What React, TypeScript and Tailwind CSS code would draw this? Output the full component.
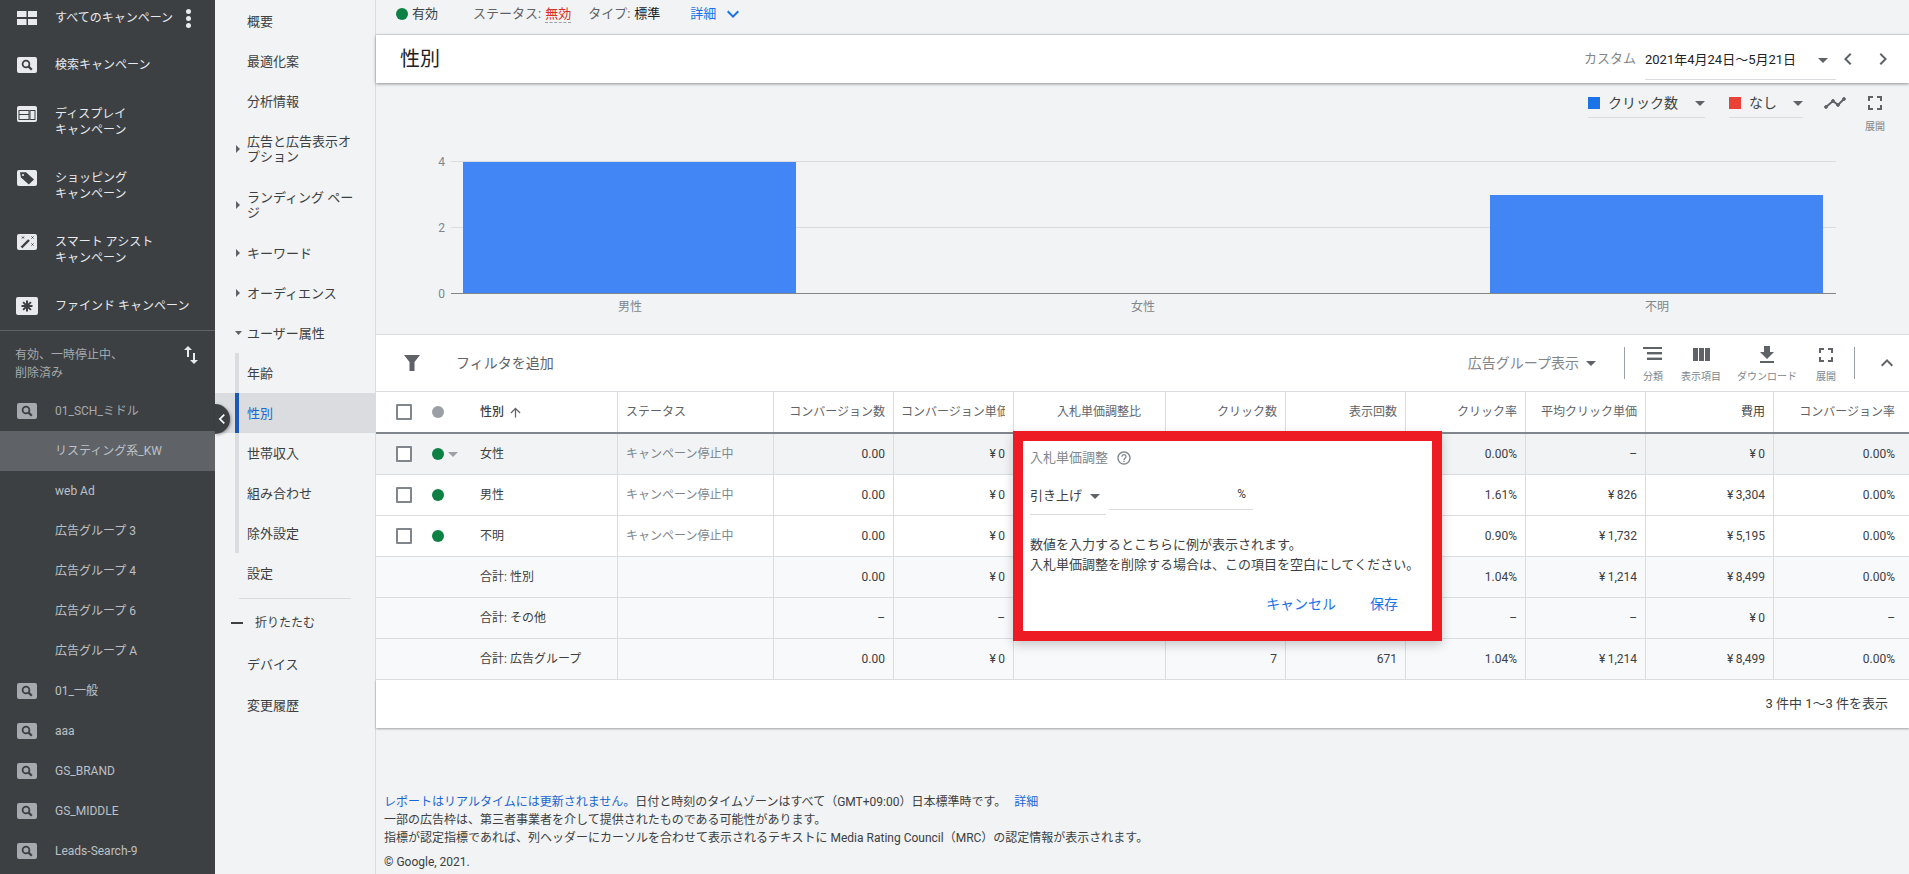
import type { ReactNode } from 'react';

const SIDE_DARK = '#3c4043';

function MIcon({ d, size = 24, className = '' }: { d: string; size?: number; className?: string }) {
  return (
    <svg width={size} height={size} viewBox="0 0 24 24" fill="currentColor" className={`shrink-0 ${className}`}>
      <path d={d} />
    </svg>
  );
}

const ICON = {
  up: 'M4 12l1.41 1.41L11 7.83V20h2V7.83l5.58 5.59L20 12l-8-8-8 8z',
  columns: 'M10 18h5V5h-5v13zm-6 0h5V5H4v13zM16 5v13h5V5h-5z',
  download: 'M19 9h-4V3H9v6H5l7 7 7-7zM5 18v2h14v-2H5z',
  fullscreen: 'M7 14H5v5h5v-2H7v-3zm-2-4h2V7h3V5H5v5zm12 7h-3v2h5v-5h-2v3zM14 5v2h3v3h2V5h-5z',
  chevronUp: 'M7.41 15.41L12 10.83l4.59 4.58L18 14l-6-6-6 6z',
  chevronLeft: 'M15.41 7.41L14 6l-6 6 6 6 1.41-1.41L10.83 12z',
  chevronRight: 'M10 6L8.59 7.41 13.17 12l-4.58 4.59L10 18l6-6z',
  chevronDown: 'M16.59 8.59L12 13.17 7.41 8.59 6 10l6 6 6-6z',
  swap: 'M16 17.01V10h-2v7.01h-3L15 21l4-3.99h-3zM9 3L5 6.99h3V14h2V6.99h3L9 3z',
  help: 'M11 18h2v-2h-2v2zm1-16C6.48 2 2 6.48 2 12s4.48 10 10 10 10-4.48 10-10S17.52 2 12 2zm0 18c-4.41 0-8-3.59-8-8s3.59-8 8-8 8 3.59 8 8-3.59 8-8 8zm0-14c-2.21 0-4 1.79-4 4h2c0-1.1.9-2 2-2s2 .9 2 2c0 2-3 1.75-3 5h2c0-2.25 3-2.5 3-5 0-2.21-1.79-4-4-4z',
};

function Caret({ className = 'text-[#5f6368]' }: { className?: string }) {
  return (
    <svg width="10" height="5" viewBox="0 0 10 5" fill="currentColor" className={`shrink-0 ${className}`}>
      <path d="M0 0h10L5 5z" />
    </svg>
  );
}

function Badge({ kind, dim = false }: { kind: 'search' | 'display' | 'tag' | 'wand' | 'find'; dim?: boolean }) {
  const fill = dim ? '#a6a9ad' : '#e8eaed';
  const w = kind === 'find' ? 22 : 20;
  const h = kind === 'find' ? 18 : 16;
  return (
    <svg width={w} height={h} viewBox={`0 0 ${w} ${h}`} className={`shrink-0 ${kind === 'find' ? '-ml-px' : ''}`}>
      <rect width={w} height={h} rx="2" fill={fill} />
      {kind === 'search' && (
        <g fill="none" stroke={SIDE_DARK}>
          <circle cx="9" cy="7" r="3.4" strokeWidth="1.8" />
          <path d="M11.6 9.6l3.2 3.2" strokeWidth="2.2" />
        </g>
      )}
      {kind === 'display' && (
        <g fill="none" stroke={SIDE_DARK} strokeWidth="1">
          <rect x="2" y="4.5" width="10" height="9" />
          <rect x="13" y="4.5" width="5" height="9" />
          <path d="M2 8.5h10" />
        </g>
      )}
      {kind === 'tag' && (
        <g>
          <path d="M3 2.2h6l8 7.4-5.2 5L4 7.4z" fill={SIDE_DARK} />
          <circle cx="6" cy="5" r="1.1" fill={fill} />
        </g>
      )}
      {kind === 'wand' && (
        <g stroke={SIDE_DARK} fill="none">
          <path d="M4.5 13.5l7.5-7.5" strokeWidth="2.4" />
          <path d="M5 2.5l2 2m0-2l-2 2M14.5 2.5l2 2m0-2l-2 2M14.5 9.5l2 2m0-2l-2 2" strokeWidth="1" />
        </g>
      )}
      {kind === 'find' && (
        <g stroke={SIDE_DARK} strokeWidth="2">
          <path d="M11 3.5v11M5.5 9h11M7.1 5.1l7.8 7.8M14.9 5.1l-7.8 7.8" />
        </g>
      )}
    </svg>
  );
}

function SideRow({ icon, children, active, twoLine, className = 'h-10 text-[#bdc1c6]' }: { icon?: ReactNode; children: ReactNode; active?: boolean; twoLine?: boolean; className?: string }) {
  return (
    <div className={`flex items-center shrink-0 ${active ? 'bg-[#5f6368]' : ''} ${className}`}>
      <div className={`w-[55px] pl-[17px] flex items-center ${twoLine ? '-mt-[14px]' : ''}`}>{icon}</div>
      <div className={`leading-4 ${twoLine ? 'pt-px' : ''}`}>{children}</div>
    </div>
  );
}

function Sidebar() {
  return (
    <aside className="w-[215px] shrink-0 h-full bg-[#3c4043] text-xs flex flex-col overflow-hidden">
      <SideRow
        className="h-9 text-[#e8eaed]"
        icon={
          <svg width="20" height="14" viewBox="0 0 20 14" fill="#e8eaed">
            <rect width="9.5" height="6" />
            <rect x="11" width="9" height="6" />
            <rect y="8" width="9.5" height="6" />
            <rect x="11" y="8" width="9" height="6" />
          </svg>
        }
      >
        <div className="flex items-center">
          <span>すべてのキャンペーン</span>
          <span className="ml-[13px] flex flex-col gap-[2px]">
            <i className="block size-[5px] rounded-full bg-[#e8eaed]" />
            <i className="block size-[5px] rounded-full bg-[#e8eaed]" />
            <i className="block size-[5px] rounded-full bg-[#e8eaed]" />
          </span>
        </div>
      </SideRow>
      <SideRow className="h-[58px] text-[#e8eaed]" icon={<Badge kind="search" />}>検索キャンペーン</SideRow>
      <SideRow twoLine className="h-[54px] text-[#e8eaed]" icon={<Badge kind="display" />}>ディスプレイ<br />キャンペーン</SideRow>
      <SideRow twoLine className="h-[74px] text-[#e8eaed]" icon={<Badge kind="tag" />}>ショッピング<br />キャンペーン</SideRow>
      <SideRow twoLine className="h-[54px] text-[#e8eaed]" icon={<Badge kind="wand" />}>スマート アシスト<br />キャンペーン</SideRow>
      <SideRow className="h-[54px] pt-[6px] box-border text-[#e8eaed]" icon={<Badge kind="find" />}>ファインド キャンペーン</SideRow>
      <div className="h-[61px] shrink-0 border-t border-[#5f6368] pt-[15px] pl-[15px] pr-[12px] flex justify-between text-[#a6a9ad]">
        <div className="leading-[18px]">有効、一時停止中、<br />削除済み</div>
        <MIcon d={ICON.swap} size={24} className="text-[#e8eaed] -mt-[3px]" />
      </div>
      <SideRow className="h-10 text-[#a6a9ad]" icon={<Badge kind="search" dim />}>01_SCH_ミドル</SideRow>
      <SideRow active>リスティング系_KW</SideRow>
      <SideRow>web Ad</SideRow>
      <SideRow>広告グループ 3</SideRow>
      <SideRow>広告グループ 4</SideRow>
      <SideRow>広告グループ 6</SideRow>
      <SideRow>広告グループ A</SideRow>
      <SideRow icon={<Badge kind="search" dim />}>01_一般</SideRow>
      <SideRow icon={<Badge kind="search" dim />}>aaa</SideRow>
      <SideRow icon={<Badge kind="search" dim />}>GS_BRAND</SideRow>
      <SideRow icon={<Badge kind="search" dim />}>GS_MIDDLE</SideRow>
      <SideRow icon={<Badge kind="search" dim />}>Leads-Search-9</SideRow>
    </aside>
  );
}

function NavRow({ children, arrow, h = 'h-10', sub, selected }: { children: ReactNode; arrow?: 'right' | 'down'; h?: string; sub?: boolean; selected?: boolean }) {
  return (
    <div className={`flex items-center shrink-0 ${h} ${selected ? 'bg-[#dadce0] text-[#1967d2]' : ''}`}>
      <div className="w-[12px] ml-[20px] flex items-center self-stretch">
        {sub && <div className={`w-1 h-full ${selected ? 'bg-[#185abc]' : 'bg-[#dadce0]'}`} />}
        {arrow === 'right' && (
          <svg width="4" height="8" viewBox="0 0 4 8" fill="#5f6368" className="ml-[1px]"><path d="M0 0l4 4-4 4z" /></svg>
        )}
        {arrow === 'down' && (
          <svg width="7" height="4" viewBox="0 0 7 4" fill="#5f6368"><path d="M0 0h7L3.5 4z" /></svg>
        )}
      </div>
      <div className="leading-[15px]">{children}</div>
    </div>
  );
}

function SecondNav() {
  return (
    <nav className="w-[161px] shrink-0 h-full bg-[#f1f3f4] border-r border-[#dadce0] text-[13px] text-[#3c4043] pt-px">
      <NavRow>概要</NavRow>
      <NavRow>最適化案</NavRow>
      <NavRow>分析情報</NavRow>
      <NavRow arrow="right" h="h-14">広告と広告表示オ<br />プション</NavRow>
      <NavRow arrow="right" h="h-14">ランディング ペー<br />ジ</NavRow>
      <NavRow arrow="right">キーワード</NavRow>
      <NavRow arrow="right">オーディエンス</NavRow>
      <NavRow arrow="down">ユーザー属性</NavRow>
      <NavRow sub>年齢</NavRow>
      <NavRow sub selected>性別</NavRow>
      <NavRow sub>世帯収入</NavRow>
      <NavRow sub>組み合わせ</NavRow>
      <NavRow sub>除外設定</NavRow>
      <NavRow>設定</NavRow>
      <div className="mt-[5px] ml-6 w-[112px] border-t border-[#dadce0]" />
      <div className="mt-1 h-10 flex items-center text-xs">
        <div className="ml-[16px] w-3 h-[2px] bg-[#3c4043]" />
        <span className="ml-3">折りたたむ</span>
      </div>
      <div className="mt-px" />
      <NavRow>デバイス</NavRow>
      <div className="mt-px" />
      <NavRow>変更履歴</NavRow>
    </nav>
  );
}

function TopBars() {
  return (
    <>
      <div className="h-[35px] shrink-0 bg-[#f1f3f4] border-b border-[#dadce0] flex items-center pl-5 pb-[7px] text-[13px] text-[#3c4043]">
        <span className="size-3 rounded-full bg-[#0d8043]" />
        <span className="ml-1">有効</span>
        <span className="ml-[35px] text-[#5f6368]">ステータス:</span>
        <span className="ml-1 text-[#d93025] border-b border-dashed border-[#9aa0a6] leading-[17px]">無効</span>
        <span className="ml-[17px] text-[#5f6368]">タイプ:</span>
        <span className="ml-1 text-[#202124]">標準</span>
        <span className="ml-[30px] text-[#1a73e8]">詳細</span>
        <MIcon d={ICON.chevronDown} className="ml-[5px] text-[#1a73e8]" />
      </div>
      <div className="relative z-10 h-[48px] shrink-0 bg-white shadow-[0_1px_3px_rgba(60,64,67,0.55)] flex items-center pl-6 pr-[14px]">
        <h1 className="text-xl text-[#202124] font-normal">性別</h1>
        <div className="ml-auto flex items-center text-[13px]">
          <span className="text-[#80868b]">カスタム</span>
          <div className="ml-[9px] w-[191px] h-[36px] mt-[6px] pb-[3px] box-border border-b border-[#dadce0] flex items-center justify-between pr-2 text-[#202124]">
            <span>2021年4月24日～5月21日</span>
            <Caret />
          </div>
          <MIcon d={ICON.chevronLeft} className="text-[#5f6368]" />
          <MIcon d={ICON.chevronRight} className="ml-[11px] text-[#5f6368]" />
        </div>
      </div>
    </>
  );
}

function Chart() {
  return (
    <section className="h-[252px] shrink-0 bg-[#f1f3f4] border-b border-[#dadce0] pt-2 flex flex-col">
      <div className="h-12 shrink-0 flex justify-end items-start pr-[19px] text-sm text-[#3c4043]">
        <div className="w-[117px] h-[27px] pb-[2px] box-border border-b border-[#dadce0] flex items-center">
          <span className="size-3 bg-[#1a73e8]" />
          <span className="ml-2">クリック数</span>
          <Caret className="ml-auto text-[#5f6368]" />
        </div>
        <div className="ml-6 w-[74px] h-[27px] pb-[2px] box-border border-b border-[#dadce0] flex items-center">
          <span className="size-3 bg-[#ea4335]" />
          <span className="ml-2">なし</span>
          <Caret className="ml-auto text-[#5f6368]" />
        </div>
        <svg width="22" height="12" viewBox="0 0 22 12" className="ml-[21px] mt-[6px]" fill="#5f6368" stroke="#5f6368">
          <path d="M2 10l7-6 5 4 6-6" fill="none" strokeWidth="2" />
          <circle cx="2" cy="10" r="1.4" />
          <circle cx="9" cy="4" r="1.4" />
          <circle cx="14" cy="8" r="1.4" />
          <circle cx="20" cy="2" r="1.4" />
        </svg>
        <div className="ml-[14px] w-[30px] flex flex-col items-center">
          <MIcon d={ICON.fullscreen} className="text-[#5f6368]" />
          <span className="mt-[6px] text-[10px] leading-3 text-[#80868b]">展開</span>
        </div>
      </div>
      <svg width="1533" height="195" viewBox="0 0 1533 195" className="block shrink-0">
        <path d="M75 22.5h1385M75 88.5h1385" stroke="#dadce0" strokeWidth="1" />
        <rect x="87" y="23" width="333" height="131" fill="#4285f4" />
        <rect x="1114" y="56" width="333" height="98" fill="#4285f4" />
        <path d="M75 154.5h1385" stroke="#80868b" strokeWidth="1" />
        <g fontSize="12" fill="#80868b" textAnchor="end">
          <text x="69" y="27">4</text>
          <text x="69" y="93">2</text>
          <text x="69" y="159">0</text>
        </g>
        <g fontSize="12" fill="#80868b" textAnchor="middle">
          <text x="254" y="172">男性</text>
          <text x="767" y="172">女性</text>
          <text x="1281" y="172">不明</text>
        </g>
      </svg>
    </section>
  );
}

function ToolButton({ w, label, children }: { w: string; label: string; children: ReactNode }) {
  return (
    <div className={`${w} h-full pt-2 flex flex-col items-center shrink-0`}>
      <div className="h-6 text-[#5f6368]">{children}</div>
      <span className="mt-1 text-[10px] leading-3 text-[#80868b] whitespace-nowrap">{label}</span>
    </div>
  );
}

function Toolbar() {
  return (
    <div className="h-14 shrink-0 bg-white flex items-center pl-7 text-sm text-[#5f6368]">
      <svg width="16" height="16" viewBox="0 0 16 16" fill="#5f6368"><path d="M0 0h16l-5.5 7v9h-5V7z" /></svg>
      <span className="ml-9">フィルタを追加</span>
      <span className="ml-auto text-[#80868b]">広告グループ表示</span>
      <Caret className="ml-[7px] text-[#5f6368]" />
      <div className="ml-7 w-px h-8 bg-[#9aa0a6]" />
      <div className="ml-[10px] h-full flex">
        <ToolButton w="w-9" label="分類">
          <svg width="20" height="24" viewBox="0 0 20 24" fill="#5f6368">
            <rect y="4" width="19" height="2" />
            <rect x="4" y="9" width="15" height="2.4" />
            <rect x="4" y="14.6" width="15" height="2.4" />
          </svg>
        </ToolButton>
        <ToolButton w="w-[60px]" label="表示項目"><MIcon d={ICON.columns} /></ToolButton>
        <ToolButton w="w-[72px]" label="ダウンロード"><MIcon d={ICON.download} /></ToolButton>
        <ToolButton w="w-[46px]" label="展開"><MIcon d={ICON.fullscreen} /></ToolButton>
      </div>
      <div className="ml-[5px] w-px h-8 bg-[#9aa0a6]" />
      <MIcon d={ICON.chevronUp} className="ml-5 mr-[10px] text-[#5f6368]" />
    </div>
  );
}

const GRID = 'grid grid-cols-[242px_156px_120px_120px_152px_120px_120px_120px_120px_128px_135px]';

type RowData = {
  name: string;
  selectable?: boolean;
  caret?: boolean;
  status?: string;
  bg: string;
  values: string[];
};

// 入札単価調整のポップアップに隠れるセルは空のまま
const rows: RowData[] = [
  { name: '女性', selectable: true, caret: true, status: 'キャンペーン停止中', bg: 'bg-[#f1f3f4]', values: ['0.00', '¥\u20090', '', '', '', '0.00%', '–', '¥\u20090', '0.00%'] },
  { name: '男性', selectable: true, status: 'キャンペーン停止中', bg: 'bg-white', values: ['0.00', '¥\u20090', '', '', '', '1.61%', '¥\u2009826', '¥\u20093,304', '0.00%'] },
  { name: '不明', selectable: true, status: 'キャンペーン停止中', bg: 'bg-white', values: ['0.00', '¥\u20090', '', '', '', '0.90%', '¥\u20091,732', '¥\u20095,195', '0.00%'] },
  { name: '合計: 性別', bg: 'bg-[#f8f9fa]', values: ['0.00', '¥\u20090', '', '', '', '1.04%', '¥\u20091,214', '¥\u20098,499', '0.00%'] },
  { name: '合計: その他', bg: 'bg-[#f8f9fa]', values: ['–', '–', '', '', '', '–', '–', '¥\u20090', '–'] },
  { name: '合計: 広告グループ', bg: 'bg-[#f8f9fa]', values: ['0.00', '¥\u20090', '', '7', '671', '1.04%', '¥\u20091,214', '¥\u20098,499', '0.00%'] },
];

const headers = ['コンバージョン数', 'コンバージョン単価', '入札単価調整比', 'クリック数', '表示回数', 'クリック率', '平均クリック単価', '費用', 'コンバージョン率'];

function Checkbox() {
  return <span className="block size-4 shrink-0 border-2 border-[#80868b] rounded-[1px] bg-white" />;
}

function Table() {
  return (
    <div className="shrink-0 text-xs text-[#3c4043]">
      <div className={`${GRID} h-[43px] bg-white border-t border-[#dadce0] border-b-2 border-b-[#80868b] box-border text-[#5f6368]`}>
        <div className="flex items-center pl-5 border-r border-[#dadce0]">
          <Checkbox />
          <div className="ml-5 w-12 shrink-0 flex items-center">
            <span className="size-3 rounded-full bg-[#9aa0a6]" />
          </div>
          <span className="font-medium text-[#3c4043]">性別</span>
          <MIcon d={ICON.up} size={15} className="ml-1 text-[#5f6368]" />
        </div>
        <div className="flex items-center pl-2 border-r border-[#dadce0]">ステータス</div>
        {headers.map((h, i) => (
          <div
            key={h}
            className={`flex items-center justify-end overflow-hidden ${i === 8 ? 'pr-[14px]' : 'border-r border-[#dadce0]'} ${i === 2 ? 'pr-6' : i === 8 ? '' : 'pr-2'} ${i === 7 ? 'text-[#3c4043]' : ''}`}
          >
            {i === 1 ? (
              <span className="block w-[104px] overflow-hidden whitespace-nowrap">{h}</span>
            ) : (
              <span className="whitespace-nowrap">{h}</span>
            )}
          </div>
        ))}
      </div>
      {rows.map((r) => (
        <div key={r.name} className={`${GRID} h-[41px] box-border border-b border-[#dadce0] ${r.bg}`}>
          <div className="flex items-center pl-5 border-r border-[#dadce0]">
            {r.selectable ? (
              <>
                <Checkbox />
                <div className="ml-5 w-12 shrink-0 flex items-center">
                  <span className="size-3 rounded-full bg-[#0d8043]" />
                  {r.caret && <Caret className="ml-1 text-[#9aa0a6]" />}
                </div>
              </>
            ) : (
              <div className="w-[84px] shrink-0" />
            )}
            <span>{r.name}</span>
          </div>
          <div className="flex items-center pl-2 border-r border-[#dadce0] text-[#80868b]">{r.status}</div>
          {r.values.map((v, i) => (
            <div key={i} className={`flex items-center justify-end ${i === 8 ? 'pr-[14px]' : 'pr-2 border-r border-[#dadce0]'}`}>{v}</div>
          ))}
        </div>
      ))}
    </div>
  );
}

function BidPopup() {
  return (
    <div className="absolute left-[637px] top-[40px] z-20 w-[429px] h-[210px] box-border border-[10px] border-[#ed1c24] bg-white shadow-[0_4px_10px_rgba(0,0,0,0.2)] pl-[7px] pt-[8px] text-[13px] text-[#3c4043]">
      <div className="flex items-center h-[18px] text-[#80868b]">
        <span>入札単価調整</span>
        <MIcon d={ICON.help} size={16} className="ml-[8px] text-[#80868b]" />
      </div>
      <div className="mt-[9px] flex items-start">
        <div className="w-[76px] h-[39px] box-border border-b border-[#dadce0] pt-[11px] flex items-start leading-[18px]">
          <span>引き上げ</span>
          <Caret className="ml-[8px] mt-[7px] text-[#5f6368]" />
        </div>
        <div className="ml-[3px] w-[144px] h-[34px] box-border border-b border-[#dadce0] pt-[10px] pr-[7px] text-right text-xs leading-4">%</div>
      </div>
      <p className="mt-[20px] leading-[20px]">
        数値を入力するとこちらに例が表示されます。<br />
        入札単価調整を削除する場合は、この項目を空白にしてください。
      </p>
      <div className="mt-[19px] flex justify-end gap-[34px] pr-[34px] text-sm leading-5 text-[#1a73e8]">
        <span>キャンセル</span>
        <span>保存</span>
      </div>
    </div>
  );
}

export default function App() {
  return (
    <div className="relative w-[1909px] h-[874px] overflow-hidden flex bg-[#f1f3f4] font-[Roboto,'Noto_Sans_CJK_JP',sans-serif]">
      <Sidebar />
      <SecondNav />

      {/* サイドバー開閉 */}
      <div className="absolute left-[215px] top-[404px] z-30 w-[15px] h-[30px] rounded-r-full bg-[#3c4043] shadow-[1px_1px_3px_rgba(0,0,0,0.35)] flex items-center">
        <MIcon d={ICON.chevronLeft} size={20} className="-ml-[3px] text-white" />
      </div>

      <main className="flex-1 min-w-0 h-full flex flex-col">
        <TopBars />
        <Chart />
        <Toolbar />
        <div className="relative shrink-0">
          <Table />
          <BidPopup />
        </div>
        <div className="h-12 shrink-0 bg-white shadow-[0_1px_2px_rgba(60,64,67,0.45)] flex items-center justify-end pr-[21px] text-[13px] text-[#3c4043]">
          3 件中 1～3 件を表示
        </div>
        <footer className="pt-[65px] pl-2 text-xs leading-[18px] text-[#3c4043]">
          <p>
            <span className="text-[#1967d2]">レポートはリアルタイムには更新されません。</span>
            日付と時刻のタイムゾーンはすべて（GMT+09:00）日本標準時です。 <span className="ml-[5px] text-[#1967d2]">詳細</span>
          </p>
          <p>一部の広告枠は、第三者事業者を介して提供されたものである可能性があります。</p>
          <p>指標が認定指標であれば、列ヘッダーにカーソルを合わせて表示されるテキストに Media Rating Council（MRC）の認定情報が表示されます。</p>
          <p className="mt-[6px]">© Google, 2021.</p>
        </footer>
      </main>
    </div>
  );
}
